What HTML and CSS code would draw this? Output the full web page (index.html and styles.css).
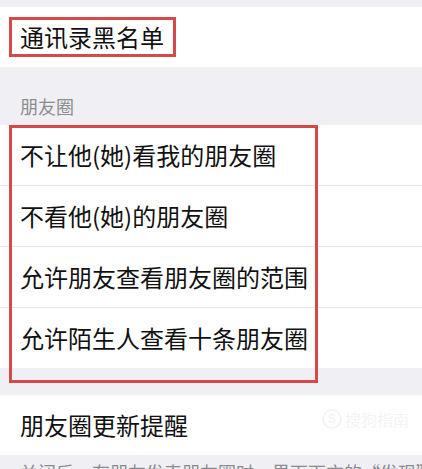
FILE: index.html
```html
<!DOCTYPE html>
<html lang="zh-CN">
<head>
<meta charset="utf-8">
<title>朋友圈设置</title>
<link rel="stylesheet" href="styles.css">
</head>
<body>
  <div class="gap-top"></div>
  <div class="row">
    <span class="mark-inline">通讯录黑名单</span>
  </div>
  <div class="section-header">朋友圈</div>
  <div class="group">
    <div class="row cell">不让他(她)看我的朋友圈</div>
    <div class="row cell sep">不看他(她)的朋友圈</div>
    <div class="row cell sep">允许朋友查看朋友圈的范围</div>
    <div class="row cell sep">允许陌生人查看十条朋友圈</div>
    <div class="mark-box"></div>
  </div>
  <div class="gap-mid"></div>
  <div class="row cell wm-row">朋友圈更新提醒
    <div class="watermark"><span class="wm-logo">S</span><span class="wm-text">搜狗指南</span></div>
  </div>
  <div class="footer">关闭后，有朋友发表朋友圈时，界面下方的“发现”切换按钮上不再出现红点提示。</div>
</body>
</html>
```
FILE: styles.css
```css
html, body {
  margin: 0;
  padding: 0;
}
body {
  background: #efeff4;
  font-family: "Noto Sans CJK SC", "Noto Sans", sans-serif;
  color: #111;
  overflow: hidden;
  width: 422px;
  height: 469px;
}
.gap-top {
  height: 7px;
}
.row {
  background: #fff;
  height: 60px;
  display: flex;
  align-items: center;
  font-size: 24px;
  line-height: 30px;
  box-sizing: border-box;
}
.cell {
  padding-left: 20px;
}
.mark-inline {
  margin-left: 9px;
  border: 3px solid #d6494b;
  padding: 2px 9px 2px 8px;
  line-height: 30px;
}
.section-header {
  height: 58px;
  box-sizing: border-box;
  display: flex;
  align-items: flex-end;
  padding: 0 0 6px 20px;
  font-size: 18px;
  line-height: 26px;
  color: #8c8c90;
}
.group {
  position: relative;
}
.sep {
  height: 61px;
  border-top: 1px solid #e6e6e8;
  background-clip: padding-box;
  position: relative;
}
.mark-box {
  position: absolute;
  left: 9px;
  top: 0;
  width: 309px;
  height: 258px;
  box-sizing: border-box;
  border: 3px solid #d6494b;
  pointer-events: none;
}
.gap-mid {
  height: 27px;
}
.wm-row {
  position: relative;
}
.watermark {
  position: absolute;
  left: 322px;
  top: 14px;
  display: flex;
  align-items: center;
  gap: 3px;
  color: #f4f4f4;
}
.wm-logo {
  width: 16px;
  height: 16px;
  border-radius: 50%;
  border: 2px solid #f4f4f4;
  font-size: 12px;
  line-height: 16px;
  text-align: center;
  font-family: "Liberation Sans", sans-serif;
  font-weight: bold;
}
.wm-text {
  font-size: 16px;
  line-height: 20px;
}
.footer {
  padding: 4px 20px 0 20px;
  font-size: 18px;
  line-height: 26px;
  color: #8c8c90;
  white-space: nowrap;
  overflow: hidden;
}
```
